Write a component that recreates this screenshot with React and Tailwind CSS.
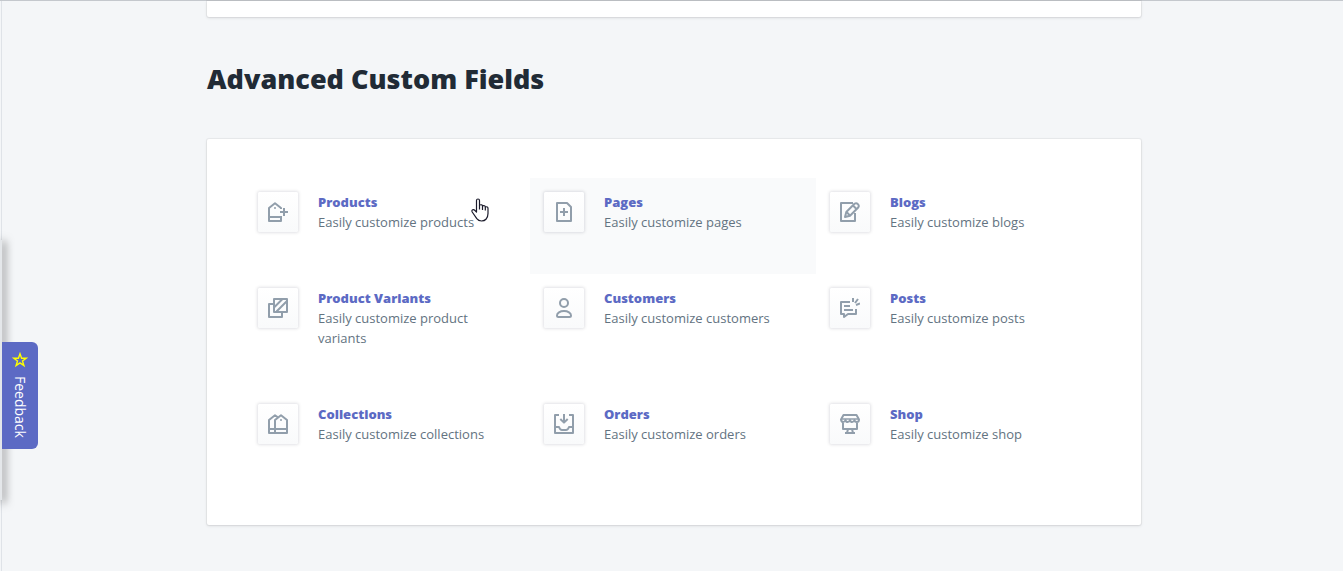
import React from "react";

const icons = {
  products: (
    <>
      <path d="M13 7V6L7 1.300 1 6v13h12v-5M1 15h12" />
      <path d="M16 6v8M12 10h8" />
      <circle cx="7" cy="6" r="1" fill="currentColor" stroke="none" />
    </>
  ),
  pages: (
    <>
      <path d="M3 1h10l4 4v14H3z" />
      <path d="M10 6v8M6 10h8" />
    </>
  ),
  blogs: (
    <>
      <path d="M13 1H1v18h14v-8" />
      <path d="M5 15l1.300-5L14.500 1.800q1.800-1.300 3.400.3t.3 3.400L10 13.700z" />
      <path d="M13 3.500l3.500 3.500M6.500 10l3.500 3.500" />
    </>
  ),
  variants: (
    <>
      <path d="M5 6H1v13h13v-4" />
      <path d="M6 1h13v13H6z" />
      <path d="M6.500 9l8-8M8.500 13.500L19 3" />
    </>
  ),
  customers: (
    <>
      <circle cx="10" cy="5" r="4" />
      <path d="M4.500 19h11q1.500 0 1.500-1.500C17 15 14 13 10 13s-7 2-7 4.500Q3 19 4.500 19z" />
    </>
  ),
  posts: (
    <>
      <path d="M10 4H1v12h3v3l4-3h8v-5" />
      <path d="M4 8h6M4 12h9" />
      <path d="M13 4V0M15 5l3-4M16 7l4-1.500" />
    </>
  ),
  collections: (
    <>
      <path d="M7 19V6l6-4.700L19 6v13H1V6l6-4.700L9.500 3M1 15h18" />
      <circle cx="13" cy="6" r="1" fill="currentColor" stroke="none" />
    </>
  ),
  orders: (
    <>
      <path d="M5 1H1v18h18V1h-4" />
      <path d="M1 13h4q1 3 3 3h4q2 0 3-3h4" />
      <path d="M10 0v8M6.300 5L10 8.600 13.700 5" />
    </>
  ),
  shop: (
    <>
      <path d="M3.500 1h13L19 5.500q0 2.500-2.200 2.500T14.500 6Q14 8 12.200 8T10 6Q9.500 8 7.700 8T5.500 6Q5 8 3.200 8T1 5.500z" />
      <path d="M1.500 5h17" strokeWidth="1.500" />
      <path d="M3 9v6h14V9M8 15l-1 4M12 15l1 4M5 19h10" />
    </>
  ),
};

const fields = [
  { icon: "products", title: "Products", text: "Easily customize products" },
  { icon: "pages", title: "Pages", text: "Easily customize pages", active: true },
  { icon: "blogs", title: "Blogs", text: "Easily customize blogs" },
  { icon: "variants", title: "Product Variants", text: "Easily customize product variants" },
  { icon: "customers", title: "Customers", text: "Easily customize customers" },
  { icon: "posts", title: "Posts", text: "Easily customize posts" },
  { icon: "collections", title: "Collections", text: "Easily customize collections" },
  { icon: "orders", title: "Orders", text: "Easily customize orders" },
  { icon: "shop", title: "Shop", text: "Easily customize shop" },
];

function FieldItem({ field }) {
  return (
    <a
      href={`#${field.icon}`}
      className={`flex items-start gap-5 pt-3.5 pr-6 pb-[42px] pl-3.5 ${
        field.active ? "bg-[#f9fafb]" : "bg-white"
      }`}
    >
      <div className="flex size-10 shrink-0 items-center justify-center rounded-xs bg-linear-to-b from-white to-[#f9fafb] text-[#919eab] shadow-[0_0_3px_1px_rgba(63,63,90,0.15)]">
        <svg
          viewBox="0 0 20 20"
          className="size-5"
          fill="none"
          stroke="currentColor"
          strokeWidth="2"
          strokeLinejoin="round"
          aria-hidden="true"
        >
          {icons[field.icon]}
        </svg>
      </div>
      <div className="text-[13px] leading-5">
        <h3 className="font-extrabold text-[#5c6ac4]">{field.title}</h3>
        <p className="text-[#637381]">{field.text}</p>
      </div>
    </a>
  );
}

function Feedback() {
  return (
    <div className="fixed top-60 left-0 flex h-[260px] items-center">
      <div className="h-full w-0.5 bg-[#e4e7ea] shadow-[2px_2px_8px_1px_rgba(0,0,0,0.5)]"></div>
      <button className="absolute top-[102px] left-0.5 flex w-9 cursor-pointer flex-col items-center gap-2 rounded-r-md bg-[#5c6ac4] pt-2.5 pb-[11px] text-sm leading-5 text-white">
        <svg
          viewBox="0 0 16 16"
          className="size-4"
          fill="none"
          stroke="#ffff00"
          strokeWidth="1.4"
          aria-hidden="true"
        >
          <path d="M8 1.800l1.600 4.400h4.600l-3.700 2.800 1.400 4.600L8 10.900l-3.900 2.700L5.500 9 1.800 6.200h4.600z" />
        </svg>
        <span className="[writing-mode:vertical-rl]">Feedback</span>
      </button>
    </div>
  );
}

function Pointer() {
  return (
    <svg
      viewBox="0 0 18 24"
      className="pointer-events-none absolute top-[59px] left-[264px] h-6 w-[18px]"
      fill="#fff"
      stroke="#1b1b2b"
      strokeWidth="1.2"
      strokeLinejoin="round"
      aria-hidden="true"
    >
      <path d="M5.500 14V2.500q0-1.500 1.500-1.500t1.500 1.500V7q2.800-.8 3 .8 2.500-.6 2.800 1 2.700-.4 2.700 1.700v5q0 3-1.800 5.500Q13.500 23 10.500 23t-4.700-2.300L1.200 14q-.8-1.700.5-2.300 1.200-.4 2.300.8z" />
      <path d="M8.500 7v4.500M11.500 8v4M14.300 9v3.500" fill="none" />
    </svg>
  );
}

function App() {
  return (
    <div className="min-h-screen border-t border-[#c4c8cd] bg-[#f4f6f8] font-['Open_Sans','Noto_Sans',sans-serif]">
      <div className="ml-px min-h-[calc(100vh-1px)] border-l border-[#dfe3e8] pl-[3px]">
        <main className="mx-auto max-w-[934px]">
          <div className="h-4 rounded-b-xs bg-white shadow-[0_0_0_1px_rgba(63,63,68,0.05),0_1px_3px_0_rgba(63,63,68,0.15)]"></div>
          <h2 className="pt-[41px] pb-[39px] text-[27px] leading-[42px] font-extrabold text-[#212b36]">
            Advanced Custom Fields
          </h2>
          <section className="relative grid grid-cols-3 rounded-xs bg-white pt-[39px] pr-[39px] pb-[39px] pl-[37px] shadow-[0_0_0_1px_rgba(63,63,68,0.05),0_1px_3px_0_rgba(63,63,68,0.15)]">
            {fields.map((field) => (
              <FieldItem key={field.icon} field={field} />
            ))}
            <Pointer />
          </section>
        </main>
      </div>
      <Feedback />
    </div>
  );
}

export default App;
